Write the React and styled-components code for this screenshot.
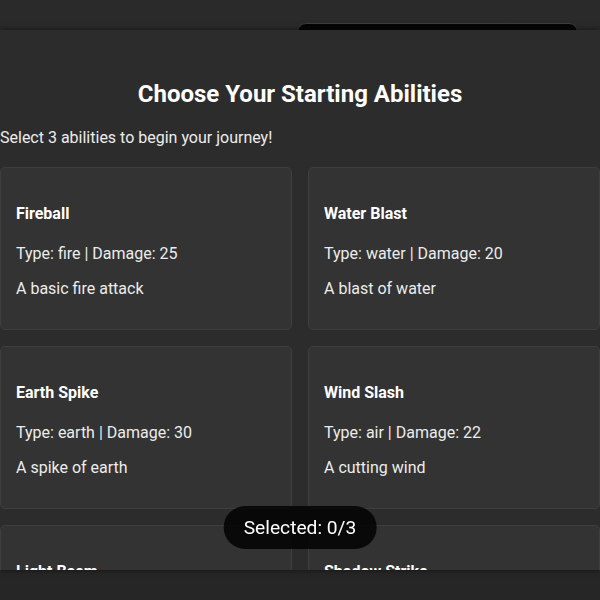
import React from "react";
import styled, { createGlobalStyle } from "styled-components";

const GlobalStyle = createGlobalStyle`
  html, body {
    margin: 0;
    padding: 0;
    height: 100%;
  }
  body {
    background: linear-gradient(#2a2a2a 0%, #292929 60%, #262626 100%);
    font-family: Roboto, "Liberation Sans", Arial, sans-serif;
    color: #ffffff;
  }
`;

const Page = styled.div`
  min-height: 100vh;
  padding-top: 23px;
  box-sizing: border-box;
`;

const TopBar = styled.header`
  display: flex;
  justify-content: flex-end;
  padding-right: 22px;
`;

const GhostButton = styled.div`
  width: 279px;
  height: 40px;
  background: #050505;
  border: 1px solid #3c3c3c;
  border-radius: 9px;
`;

const Overlay = styled.div`
  position: fixed;
  inset: 0;
  display: flex;
  align-items: center;
  justify-content: center;
  z-index: 10;
`;

const Modal = styled.div`
  width: 100%;
  max-height: 90vh;
  overflow-y: auto;
  scrollbar-width: none;
  background: #2c2c2c;
  box-shadow: 0 0 6px rgba(0, 0, 0, 0.55);
  padding: 30px 0;
  box-sizing: border-box;
  &::-webkit-scrollbar {
    display: none;
  }
`;

const Title = styled.h2`
  font-size: 24px;
  font-weight: 700;
  text-align: center;
  margin: 19.92px 0;
  color: #ffffff;
`;

const Subtitle = styled.p`
  font-size: 16px;
  margin: 16px 0;
  color: #ececec;
`;

const Grid = styled.div`
  display: grid;
  grid-template-columns: 1fr 1fr;
  gap: 16px;
  margin: 20px 0;
`;

const Card = styled.div`
  background: #333333;
  border: 1px solid #3e3e3e;
  border-radius: 5px;
  padding: 16px 15px 15px;
  cursor: pointer;
`;

const CardTitle = styled.h3`
  font-size: 16px;
  font-weight: 700;
  margin: 20px 0 21px;
  color: #ffffff;
`;

const CardText = styled.p`
  font-size: 16px;
  margin: 16px 0;
  color: #ececec;
`;

const Counter = styled.div`
  position: fixed;
  left: 50%;
  bottom: 51px;
  transform: translateX(-50%);
  background: rgba(0, 0, 0, 0.82);
  color: #ffffff;
  font-size: 1.2rem;
  padding: 10px 20px;
  border-radius: 22px;
  z-index: 20;
  white-space: nowrap;
`;

const abilities = [
  { name: "Fireball", type: "fire", damage: 25, desc: "A basic fire attack" },
  { name: "Water Blast", type: "water", damage: 20, desc: "A blast of water" },
  { name: "Earth Spike", type: "earth", damage: 30, desc: "A spike of earth" },
  { name: "Wind Slash", type: "air", damage: 22, desc: "A cutting wind" },
  { name: "Light Beam", type: "light", damage: 28, desc: "A beam of pure light" },
  { name: "Shadow Strike", type: "dark", damage: 27, desc: "A strike from the shadows" },
];

export default function App() {
  return (
    <>
      <GlobalStyle />
      <Page>
        <TopBar>
          <GhostButton />
        </TopBar>
      </Page>
      <Overlay>
        <Modal>
          <Title>Choose Your Starting Abilities</Title>
          <Subtitle>Select 3 abilities to begin your journey!</Subtitle>
          <Grid>
            {abilities.map((a) => (
              <Card key={a.name}>
                <CardTitle>{a.name}</CardTitle>
                <CardText>
                  Type: {a.type} | Damage: {a.damage}
                </CardText>
                <CardText>{a.desc}</CardText>
              </Card>
            ))}
          </Grid>
        </Modal>
      </Overlay>
      <Counter>Selected: 0/3</Counter>
    </>
  );
}
